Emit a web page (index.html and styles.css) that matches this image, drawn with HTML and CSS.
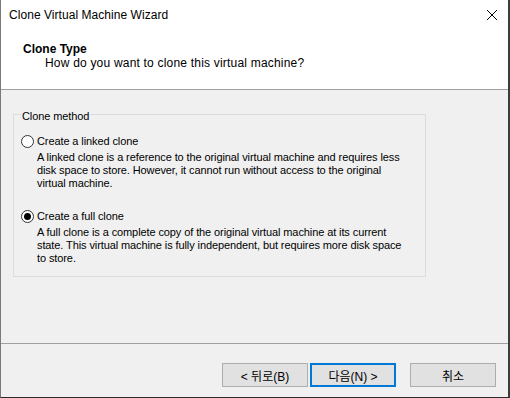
FILE: index.html
```html
<!DOCTYPE html>
<html lang="en">
<head>
    <meta charset="UTF-8">
    <title>Clone Virtual Machine Wizard</title>
    <link rel="stylesheet" href="styles.css">
</head>
<body>
    <div class="wizard">
        <div class="top">
            <div class="titlebar">
                <span class="title">Clone Virtual Machine Wizard</span>
                <svg class="close" width="12" height="12" viewBox="0 0 12 12">
                    <path d="M1 1 L11 11 M11 1 L1 11" stroke="#000" stroke-width="1" fill="none"/>
                </svg>
            </div>
            <div class="header">
                <div class="heading">Clone Type</div>
                <div class="subheading">How do you want to clone this virtual machine?</div>
            </div>
        </div>

        <div class="content">
            <fieldset class="group">
                <legend>Clone method</legend>
                <label class="option">
                    <input type="radio" name="method">
                    <span>Create a linked clone</span>
                </label>
                <p class="desc">A linked clone is a reference to the original virtual machine and requires less<br>disk space to store. However, it cannot run without access to the original<br>virtual machine.</p>

                <label class="option second">
                    <input type="radio" name="method" checked>
                    <span>Create a full clone</span>
                </label>
                <p class="desc">A full clone is a complete copy of the original virtual machine at its current<br>state. This virtual machine is fully independent, but requires more disk space<br>to store.</p>
            </fieldset>
        </div>

        <div class="footer">
            <button class="btn">&lt; 뒤로(B)</button>
            <button class="btn default">다음(N) &gt;</button>
            <button class="btn cancel">취소</button>
        </div>
    </div>
</body>
</html>
```

FILE: styles.css
```css
html, body {
    margin: 0;
    padding: 0;
}
body {
    font-family: 'Liberation Sans', 'Noto Sans CJK KR', sans-serif;
    font-size: 12px;
    color: #000;
    background-color: #f0f0f0;
}
.wizard {
    width: 510px;
    height: 398px;
    box-sizing: border-box;
    border-left: 1px solid #7a7a7a;
    border-right: 2px solid #3c3c3c;
    border-bottom: 1px solid #2b2b2b;
    background-color: #f0f0f0;
    display: flex;
    flex-direction: column;
}
.top {
    background-color: #fff;
    height: 90px;
    box-sizing: border-box;
    border-bottom: 1px solid #a0a0a0;
}
.titlebar {
    height: 30px;
    display: flex;
    align-items: center;
    justify-content: space-between;
    padding: 0 8px 0 8px;
}
.title {
    line-height: 30px;
    letter-spacing: 0.05px;
}
.close {
    margin-right: 2px;
}
.header {
    padding: 12px 0 0 22px;
}
.heading {
    font-weight: bold;
    line-height: 14px;
}
.subheading {
    line-height: 14px;
    padding-left: 22px;
    letter-spacing: 0.2px;
}
.content {
    height: 254px;
    box-sizing: border-box;
    border-bottom: 1px solid #a0a0a0;
    padding: 15px 0 0 12px;
}
/* group box uses the smaller dialog font */
.group {
    width: 413px;
    box-sizing: border-box;
    margin: 0;
    border: 1px solid #dcdcdc;
    padding: 11px 0 11px 7px;
    font-size: 11px;
    letter-spacing: -0.1px;
}
.group legend {
    padding: 4px 1px 0 1px;
    line-height: 14px;
}
.option {
    display: flex;
    align-items: center;
    height: 14px;
    line-height: 14px;
    margin-bottom: 3px;
}
.option.second {
    margin-top: 19px;
}
.option input {
    appearance: none;
    -webkit-appearance: none;
    width: 13px;
    height: 13px;
    margin: 0 3px 0 0;
    border: 1px solid #333;
    border-radius: 50%;
    background-color: #fff;
    box-sizing: border-box;
    display: grid;
    place-items: center;
}
.option input:checked::after {
    content: '';
    width: 7px;
    height: 7px;
    border-radius: 50%;
    background-color: #000;
}
.desc {
    margin: 0;
    padding-left: 16px;
    line-height: 13px;
    white-space: nowrap;
}
.footer {
    flex: 1;
    display: flex;
    justify-content: flex-end;
    align-items: flex-start;
    padding: 19px 12px 0 0;
    gap: 2px;
}
.btn {
    width: 86px;
    height: 24px;
    font-family: inherit;
    font-size: 12px;
    color: #000;
    background-color: #e1e1e1;
    border: 1px solid #adadad;
    padding: 0;
    margin: 0;
}
.btn.default {
    border: 2px solid #0078d7;
}
.btn.cancel {
    margin-left: 12px;
}
```
